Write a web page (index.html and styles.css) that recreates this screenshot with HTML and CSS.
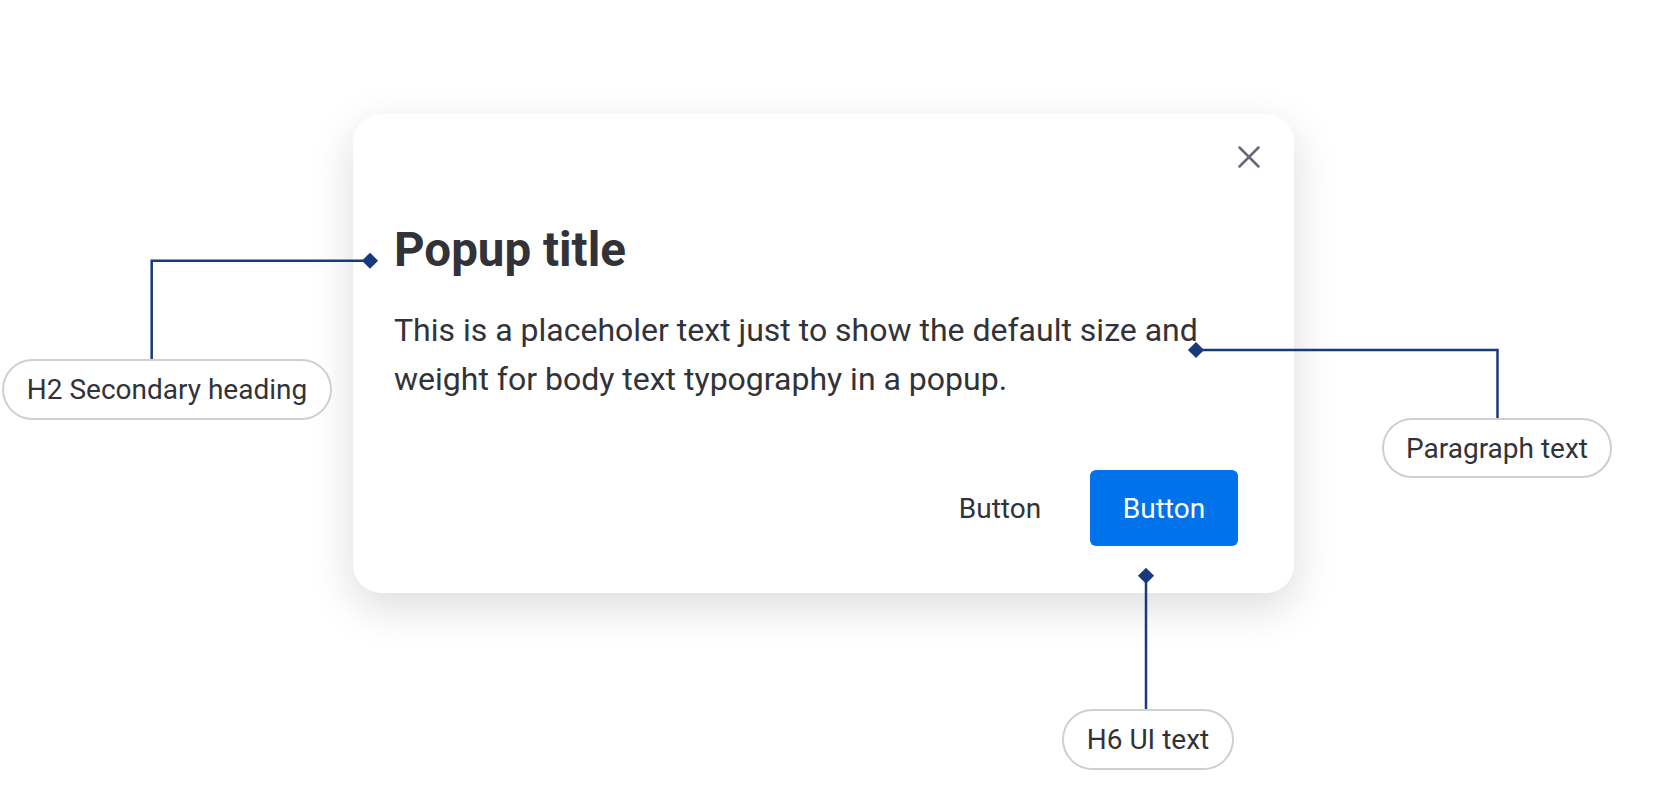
FILE: index.html
```html
<!DOCTYPE html>
<html lang="en">
<head>
<meta charset="utf-8">
<title>Popup typography</title>
<link rel="stylesheet" href="styles.css">
</head>
<body>
<div class="stage">
  <section class="popup">
    <header class="popup-header">
      <button class="close" aria-label="Close">
        <svg width="22" height="22" viewBox="0 0 22 22"><path d="M1.5 1.5 L20.5 20.5 M20.5 1.5 L1.5 20.5" stroke="#676879" stroke-width="2.5" fill="none" stroke-linecap="round"/></svg>
      </button>
    </header>
    <h2 class="popup-title">Popup title</h2>
    <p class="popup-body">This is a placeholer text just to show the default size and weight for body text typography in a popup.</p>
    <footer class="popup-footer">
      <button class="btn btn-tertiary">Button</button>
      <button class="btn btn-primary">Button</button>
    </footer>
  </section>

  <svg class="connectors" width="1667" height="808" viewBox="0 0 1667 808">
    <g fill="none" stroke="#183a7a" stroke-width="2.5">
      <polyline points="151.7,359 151.7,260.7 370,260.7"/>
      <polyline points="1196,350 1497.5,350 1497.5,418"/>
      <polyline points="1146,575.7 1146,709"/>
    </g>
    <g fill="#183a7a">
      <rect x="-5.7" y="-5.7" width="11.4" height="11.4" transform="translate(370 260.7) rotate(45)"/>
      <rect x="-5.7" y="-5.7" width="11.4" height="11.4" transform="translate(1196 350) rotate(45)"/>
      <rect x="-5.7" y="-5.7" width="11.4" height="11.4" transform="translate(1146 575.7) rotate(45)"/>
    </g>
  </svg>

  <div class="tag tag-h2">H2 Secondary heading</div>
  <div class="tag tag-para">Paragraph text</div>
  <div class="tag tag-h6">H6 UI text</div>
</div>
</body>
</html>
```

FILE: styles.css
```css
* { box-sizing: border-box; }

html, body {
  margin: 0;
  padding: 0;
  background: #ffffff;
}

body {
  font-family: Roboto, "Liberation Sans", Arial, sans-serif;
  color: #323338;
  width: 1667px;
  height: 808px;
  overflow: hidden;
}

.stage {
  position: relative;
  width: 1667px;
  height: 808px;
  padding: 114px 0 0 353px;
}

.popup {
  width: 941px;
  height: 479px;
  background: #ffffff;
  border-radius: 28px;
  box-shadow: 0 14px 44px rgba(0, 0, 0, 0.14);
  padding: 23px 25px 47px 41px;
  display: flex;
  flex-direction: column;
}

.popup-header {
  display: flex;
  justify-content: flex-end;
  height: 40px;
}

.close {
  width: 40px;
  height: 40px;
  border: 0;
  padding: 0;
  background: transparent;
  display: flex;
  align-items: center;
  justify-content: center;
}

.popup-title {
  margin: 45px 0 0 0;
  font-size: 47.5px;
  line-height: 56px;
  font-weight: 700;
  color: #323338;
}

.popup-body {
  margin: 28px 0 0 0;
  font-size: 32px;
  line-height: 48.5px;
  font-weight: 400;
  max-width: 850px;
  color: #323338;
}

.popup-footer {
  margin-top: auto;
  margin-right: 31px;
  display: flex;
  justify-content: flex-end;
  gap: 16px;
}

.btn {
  width: 148px;
  height: 76px;
  border: 0;
  border-radius: 6px;
  font-family: Roboto, "Liberation Sans", Arial, sans-serif;
  font-size: 28px;
  font-weight: 400;
  display: flex;
  align-items: center;
  justify-content: center;
  padding: 0;
}

.btn-tertiary {
  background: transparent;
  color: #323338;
}

.btn-primary {
  background: #0073ea;
  color: #ffffff;
}

.connectors {
  position: absolute;
  left: 0;
  top: 0;
  pointer-events: none;
}

.tag {
  position: absolute;
  height: 61px;
  border: 2px solid #cfcfd2;
  border-radius: 31px;
  background: #ffffff;
  display: flex;
  align-items: center;
  justify-content: center;
  font-size: 28px;
  color: #323338;
  white-space: nowrap;
}

.tag-h2 { left: 2px; top: 359px; width: 330px; }
.tag-para { left: 1382px; top: 418px; width: 230px; height: 60px; }
.tag-h6 { left: 1062px; top: 709px; width: 172px; }
```
